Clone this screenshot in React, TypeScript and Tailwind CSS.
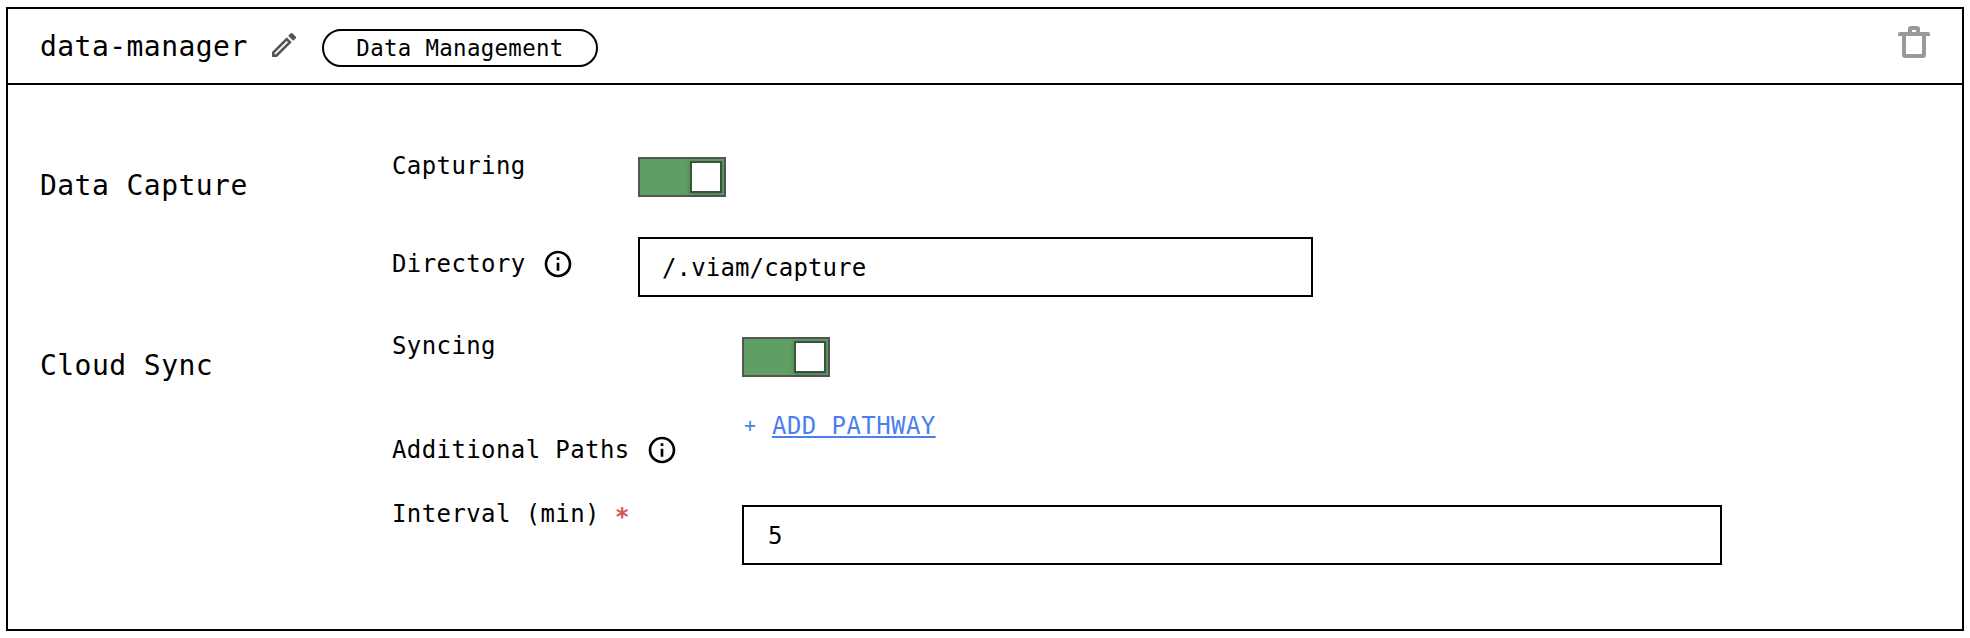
import type { ReactNode } from "react";

function PencilIcon() {
  return (
    <svg viewBox="0 0 24 24" className="size-8 shrink-0 fill-[#555555]">
      <path d="M14.06 9.02l.92.92L5.92 19H5v-.92l9.06-9.06M17.66 3c-.25 0-.51.1-.7.29l-1.83 1.83 3.75 3.75 1.83-1.83c.39-.39.39-1.04 0-1.41l-2.34-2.34c-.2-.2-.45-.29-.71-.29m-3.6 3.19L3 17.25V21h3.75L17.81 9.94l-3.75-3.75Z" />
    </svg>
  );
}

function TrashIcon() {
  return (
    <svg viewBox="0 0 32 32" className="size-8 shrink-0 fill-[#999999]">
      <path
        fillRule="evenodd"
        d="M10 6V3Q10 0 13 0H19Q22 0 22 3V6H30Q32 6 32 8V10H28V29Q28 32 25 32H7Q4 32 4 29V10H0V8Q0 6 2 6ZM14 4V6H18V4ZM8 10V28H24V10Z"
      />
    </svg>
  );
}

function InfoIcon() {
  return (
    <svg viewBox="0 0 24 24" className="size-8 shrink-0 fill-black">
      <path d="M11 9h2V7h-2v2Zm1 11c-4.41 0-8-3.59-8-8s3.59-8 8-8 8 3.59 8 8-3.59 8-8 8Zm0-18C6.48 2 2 6.48 2 12s4.48 10 10 10 10-4.48 10-10S17.52 2 12 2Zm-1 15h2v-6h-2v6Z" />
    </svg>
  );
}

function Toggle() {
  return (
    <button
      type="button"
      role="switch"
      aria-checked="true"
      className="mt-[7px] flex h-10 w-[88px] items-center justify-end border-2 border-[#555555] bg-[#5f9f63] pr-0.5"
    >
      <span className="size-8 border-2 border-[#35563a] bg-white shadow-[0_1px_4px_rgba(0,0,0,0.25)]" />
    </button>
  );
}

function Heading({ children }: { children: ReactNode }) {
  return (
    <h2 className="mt-[18px] w-[352px] shrink-0 text-[28px] leading-9 tracking-[0.45px]">
      {children}
    </h2>
  );
}

export default function App() {
  return (
    <main className="h-[638px] w-[1970px] bg-white pt-[7px] pl-[6px] font-['DejaVu_Sans_Mono',monospace] text-2xl leading-8 tracking-[0.4px] text-black">
      <section className="h-[624px] w-[1958px] border-2 border-black">
        <header className="flex h-[76px] items-start border-b-2 border-black pr-8 pl-8">
          <h1 className="mt-5 w-[228px] text-[28px] leading-9 tracking-[0.45px] whitespace-nowrap">
            data-manager
          </h1>
          <div className="mt-5">
            <PencilIcon />
          </div>
          <span className="mt-5 ml-[22px] flex h-[38px] w-[276px] items-center justify-center rounded-full border-2 border-black text-[22.4px] tracking-[0.34px] whitespace-nowrap">
            Data Management
          </span>
          <div className="mt-[17px] ml-auto">
            <TrashIcon />
          </div>
        </header>

        <div className="pt-[65px] pl-8">
          <div className="flex h-[180px]">
            <Heading>Data Capture</Heading>
            <div className="grid grid-cols-[246px_675px] grid-rows-[87px_60px]">
              <label>Capturing</label>
              <Toggle />
              <label className="mt-[11px] flex gap-4">
                Directory
                <InfoIcon />
              </label>
              <input
                defaultValue="/.viam/capture"
                className="h-[60px] w-full border-2 border-black px-[22px] pt-0.5 tracking-[0.15px]"
              />
            </div>
          </div>

          <div className="flex">
            <Heading>Cloud Sync</Heading>
            <div className="grid grid-cols-[350px_980px] grid-rows-[80px_88px_67px]">
              <label>Syncing</label>
              <Toggle />
              <label className="mt-6 flex gap-4 whitespace-nowrap">
                Additional Paths
                <InfoIcon />
              </label>
              <div className="flex gap-[14px] tracking-[0.43px] text-[#4b7fee]">
                <span className="w-4 pl-0.5 text-xl leading-[30px]">+</span>
                <a className="h-8 underline decoration-2 underline-offset-2">ADD PATHWAY</a>
              </div>
              <label className="flex gap-[15px] whitespace-nowrap">
                Interval (min)
                <span className="pt-[3px] font-bold text-[#d9534f]">*</span>
              </label>
              <input
                defaultValue="5"
                className="mt-[7px] h-[60px] w-full border-2 border-black px-6 pt-0.5"
              />
            </div>
          </div>
        </div>
      </section>
    </main>
  );
}
